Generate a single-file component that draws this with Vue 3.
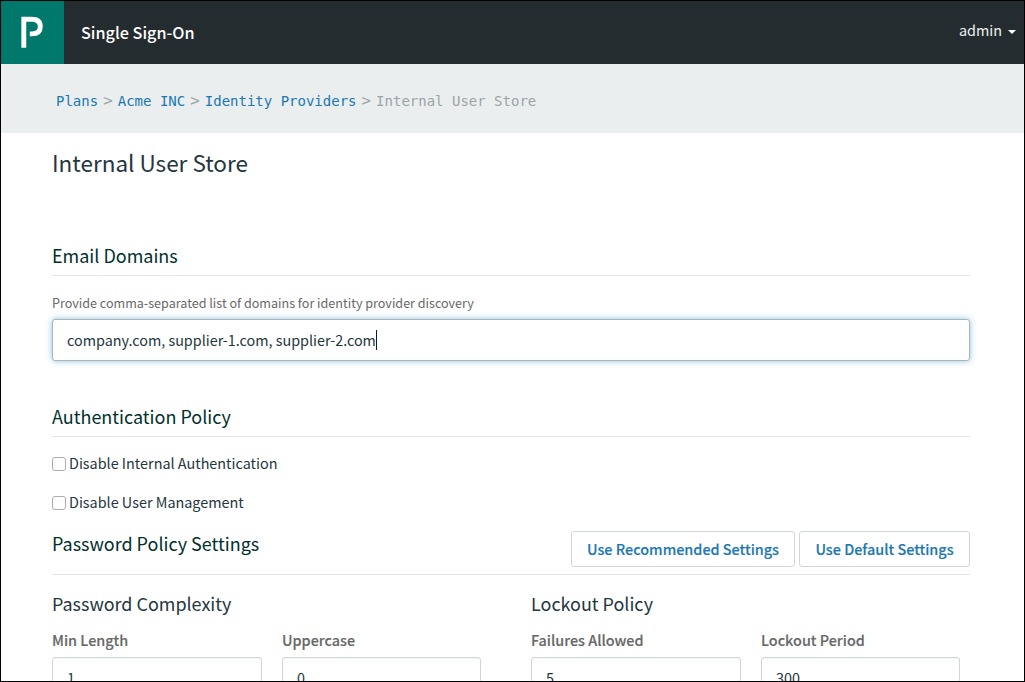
<script setup>
import { ref } from 'vue'

const crumbs = ['Plans', 'Acme INC', 'Identity Providers']
const domains = ref('company.com, supplier-1.com, supplier-2.com')
const toggles = ['Disable Internal Authentication', 'Disable User Management']
const groups = [
  { title: 'Password Complexity', fields: [{ label: 'Min Length', value: '1' }, { label: 'Uppercase', value: '0' }] },
  { title: 'Lockout Policy', fields: [{ label: 'Failures Allowed', value: '5' }, { label: 'Lockout Period', value: '300' }] },
]
</script>

<template>
  <div class="page">
    <header class="topbar">
      <div class="logo">
        <svg width="63" height="63" viewBox="0 0 63 63" aria-hidden="true">
          <path d="M22.8 46.7V18.3H30.5C36.8 18.3 39.3 21 39.3 25.6C39.3 30.4 36.3 32.9 31 32.9H28.8" fill="none" stroke="#fff" stroke-width="4.9" />
        </svg>
      </div>
      <div class="brand"><span>Single Sign-On</span></div>
      <div class="account"><span>admin</span><i class="caret"></i></div>
    </header>
    <nav class="crumbs">
      <template v-for="c in crumbs" :key="c">
        <a>{{ c }}</a><span class="sep">&gt;</span>
      </template>
      <span class="current">Internal User Store</span>
    </nav>
    <main class="content">
      <h1><span>Internal User Store</span></h1>

      <section class="domains">
        <h2><span>Email Domains</span></h2>
        <p><span>Provide comma-separated list of domains for identity provider discovery</span></p>
        <div class="input focused"><span>{{ domains }}</span><i class="cursor"></i></div>
      </section>

      <section class="auth">
        <h2><span>Authentication Policy</span></h2>
        <label v-for="t in toggles" :key="t" class="check"><i class="box"></i><span>{{ t }}</span></label>
      </section>

      <section>
        <div class="settings-head">
          <h2><span>Password Policy Settings</span></h2>
          <div class="actions">
            <button class="rec"><span>Use Recommended Settings</span></button>
            <button class="def"><span>Use Default Settings</span></button>
          </div>
        </div>
        <div class="groups">
          <div v-for="g in groups" :key="g.title" class="group">
            <h3><span>{{ g.title }}</span></h3>
            <div class="fields">
              <div v-for="f in g.fields" :key="f.label" class="field">
                <div class="label"><span>{{ f.label }}</span></div>
                <div class="input"><span>{{ f.value }}</span></div>
              </div>
            </div>
          </div>
        </div>
      </section>
    </main>
  </div>
</template>

<style>
body { margin: 0; overflow: hidden; }
</style>

<style scoped>
* { box-sizing: border-box; }
.page {
  width: 1025px; height: 682px; overflow: hidden;
  border: 1px solid #000; background: #fff; color: #243640;
  font-family: "Noto Sans CJK SC", "Source Sans Pro", sans-serif;
  font-size: 14.4px; line-height: 20px;
}
h1, h2, h3, p { margin: 0; font-weight: 400; white-space: nowrap; }
.topbar { display: flex; height: 63px; background: #252c2f; color: #fff; }
.logo { width: 63px; height: 63px; background: #00786c; }
.logo svg { display: block; }
.brand { flex: 1; padding: 21px 0 0 17px; font-size: 16.2px; font-weight: 500; }
.account { display: flex; padding: 19px 8px 0 0; color: #eef1f2; }
.caret { margin: 10px 0 0 6px; width: 8px; height: 4px; background: #fff; clip-path: polygon(0 0, 100% 0, 50% 100%); }
.crumbs {
  display: flex; height: 69px; padding: 27px 0 0 55px; background: #eaeeef;
  font-family: "DejaVu Sans Mono", monospace; font-size: 14px; color: #9ba5a7; white-space: pre;
}
.crumbs a { color: #1b78b3; }
.sep { width: 19.6px; margin-top: -1px; text-align: center; font-family: "Noto Sans CJK SC", sans-serif; font-size: 17px; }
.content { padding: 0 54px 0 51px; }
h1 { padding-top: 13px; height: 104px; font-size: 22.5px; line-height: 32px; }
h2 { font-size: 17.98px; line-height: 26px; color: #00302d; }
.domains h2, .auth h2 { height: 39px; padding-top: 5px; border-bottom: 1px solid #e3e5e6; }
.domains { height: 161px; }
.domains p { margin-top: 17px; margin-bottom: 6px; height: 20px; font-size: 12.57px; color: #686868; }
.input {
  display: flex; align-items: center; height: 42px; padding-left: 14px;
  border: 1px solid #d1d6d6; border-radius: 3px; background: #fff;
  box-shadow: inset 0 1px 1px rgba(0, 0, 0, .05);
}
.input.focused { font-size: 14.36px; border-color: #b1b4b4; box-shadow: 0 0 6px rgba(73, 164, 218, .65); }
.cursor { width: 1px; height: 20px; background: #00232c; }
.auth { height: 131px; }
.check { display: flex; align-items: center; height: 20px; margin-top: 16px; }
.check + .check { margin-top: 19px; }
.box { width: 14px; height: 14px; margin: 2px 3px 0 0; border: 1px solid #acacac; border-radius: 3px; background: #fff; }
.settings-head { display: flex; justify-content: space-between; height: 46px; border-bottom: 1px solid #e3e5e6; }
.settings-head h2 { padding-top: 1px; }
.actions { display: flex; gap: 4px; padding-top: 2px; }
button {
  height: 36px; padding: 0; border: 1px solid #d1d6d6; border-radius: 3px; background: #fff;
  color: #1b78b3; font: 500 14.4px/20px "Noto Sans CJK SC", sans-serif; white-space: nowrap;
  -webkit-text-stroke: .15px #1b78b3;
}
.rec { width: 224px; }
.def { width: 171px; }
.groups { display: flex; }
.group { width: 479px; flex: none; }
h3 { padding-top: 15px; height: 51px; font-size: 17.95px; line-height: 26px; }
.fields { display: flex; gap: 20px; }
.field:first-child { width: 210px; }
.field:last-child { width: 199px; }
.label { padding-top: 4px; height: 31px; font-weight: 500; color: #686868; -webkit-text-stroke: .15px #686868; }
</style>
